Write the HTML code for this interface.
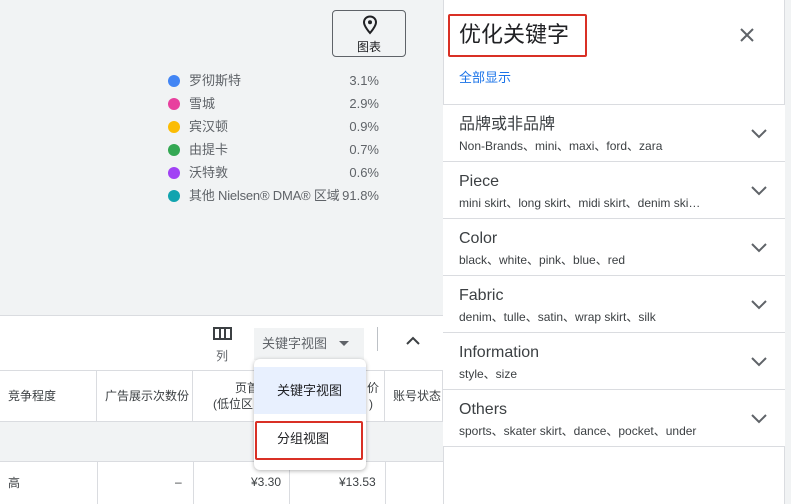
<!DOCTYPE html>
<html><head><meta charset="utf-8"><style>
*{box-sizing:border-box;margin:0;padding:0}
body{width:791px;height:504px;overflow:hidden;position:relative;background:#f1f3f4;font-family:"Liberation Sans","Noto Sans CJK SC",sans-serif;color:#3c4043;line-height:1.15}
.a{position:absolute}
.leg{left:168px;font-size:13px;color:#5f6368;width:215px;height:20px;line-height:16px}
.leg i{position:absolute;left:0;top:2px;width:12px;height:12px;border-radius:50%}
.leg span{position:absolute;left:21px;top:0;white-space:nowrap}
.leg b{position:absolute;right:4px;top:0;font-weight:normal}
.row{position:absolute;left:443px;width:342px;height:57px;border-top:1px solid #dadce0;background:#fff}
.row .t{position:absolute;left:16px;top:10px;font-size:16px;line-height:20px;color:#3c4043}
.row .s{position:absolute;left:16px;top:34px;font-size:12px;line-height:15px;color:#3c4043;white-space:nowrap}
.row svg{position:absolute;right:18px;top:24px}
.th{position:absolute;top:370px;height:52px;border-right:1px solid #dadce0;font-size:12px;color:#3c4043;line-height:15px}
</style></head><body>
<!-- chart button -->
<div class="a" style="left:332px;top:10px;width:74px;height:47px;border:1px solid #5f6368;border-radius:4px;background:#f1f3f4"></div>
<svg class="a" style="left:362px;top:15px" width="16" height="20" viewBox="0 0 16 20"><path d="M8 1.5C4.5 1.5 2 4 2 7.3 2 11.5 8 18 8 18s6-6.5 6-10.7C14 4 11.5 1.5 8 1.5z" fill="none" stroke="#202124" stroke-width="2"/><circle cx="8" cy="7.3" r="2" fill="#202124"/></svg>
<div class="a" style="left:357px;top:40px;font-size:12px;line-height:14px;color:#202124">图表</div>
<div class="a leg" style="top:73px"><i style="background:#4285f4"></i><span>罗彻斯特</span><b>3.1%</b></div>
<div class="a leg" style="top:96px"><i style="background:#e8409e"></i><span>雪城</span><b>2.9%</b></div>
<div class="a leg" style="top:119px"><i style="background:#fbbc04"></i><span>宾汉顿</span><b>0.9%</b></div>
<div class="a leg" style="top:142px"><i style="background:#34a853"></i><span>由提卡</span><b>0.7%</b></div>
<div class="a leg" style="top:165px"><i style="background:#a142f4"></i><span>沃特敦</span><b>0.6%</b></div>
<div class="a leg" style="top:188px"><i style="background:#12a4af"></i><span style="letter-spacing:-0.2px">其他 Nielsen® DMA® 区域</span><b>91.8%</b></div>
<!-- toolbar -->
<div class="a" style="left:0;top:315px;width:443px;height:55px;background:#fff;border-top:1px solid #dadce0"></div>
<svg class="a" style="left:213px;top:327px" width="19" height="13"><rect x="1" y="1" width="17" height="11" fill="none" stroke="#3c4043" stroke-width="2"/><path d="M7 1v11M12 1v11" stroke="#3c4043" stroke-width="2"/></svg>
<div class="a" style="left:216px;top:349px;font-size:12px;line-height:14px;color:#5f6368">列</div>
<div class="a" style="left:254px;top:328px;width:110px;height:32px;background:#f1f3f4"></div>
<div class="a" style="left:262px;top:336px;font-size:13px;line-height:16px;color:#5f6368">关键字视图</div>
<div class="a" style="left:339px;top:341px;border-left:5px solid transparent;border-right:5px solid transparent;border-top:5px solid #5f6368"></div>
<div class="a" style="left:377px;top:327px;width:1px;height:24px;background:#bdc1c6"></div>
<svg class="a" style="left:405px;top:336px" width="16" height="10"><path d="M2 8l6-6 6 6" fill="none" stroke="#3c4043" stroke-width="2"/></svg>
<!-- table -->
<div class="a" style="left:0;top:370px;width:443px;height:134px;background:#fff;border-top:1px solid #dadce0"></div>
<div class="th" style="left:0;width:97px"><span class="a" style="left:8px;top:19px">竞争程度</span></div>
<div class="th" style="left:97px;width:96px;overflow:hidden"><span class="a" style="left:8px;top:19px;white-space:nowrap">广告展示次数份</span></div>
<div class="th" style="left:193px;width:96px"><span class="a" style="left:42px;top:11px">页首</span><span class="a" style="left:20px;top:27px">(低位区</span></div>
<div class="th" style="left:289px;width:96px"><span class="a" style="left:78px;top:11px">价</span><span class="a" style="left:80px;top:27px">)</span></div>
<div class="th" style="left:385px;width:58px;overflow:hidden"><span class="a" style="left:8px;top:19px;white-space:nowrap">账号状态</span></div>
<div class="a" style="left:0;top:421px;width:443px;height:41px;background:#f1f3f4;border-top:1px solid #dadce0;border-bottom:1px solid #dadce0"></div>
<div class="a" style="left:97px;top:462px;width:1px;height:42px;background:#dadce0"></div>
<div class="a" style="left:193px;top:462px;width:1px;height:42px;background:#dadce0"></div>
<div class="a" style="left:289px;top:462px;width:1px;height:42px;background:#dadce0"></div>
<div class="a" style="left:385px;top:462px;width:1px;height:42px;background:#dadce0"></div>
<div class="a" style="left:8px;top:476px;font-size:12px;line-height:15px">高</div>
<div class="a" style="left:175px;top:475px;font-size:12px;line-height:15px">–</div>
<div class="a" style="left:251px;top:475px;font-size:12px;line-height:15px">¥3.30</div>
<div class="a" style="left:339px;top:475px;font-size:12px;line-height:15px">¥13.53</div>
<!-- dropdown menu -->
<div class="a" style="left:254px;top:359px;width:112px;height:111px;background:#fff;border-radius:6px;box-shadow:0 1px 4px rgba(0,0,0,.3)"></div>
<div class="a" style="left:254px;top:367px;width:112px;height:47px;background:#e8f0fe"></div>
<div class="a" style="left:277px;top:383px;font-size:13px;line-height:16px;color:#202124">关键字视图</div>
<div class="a" style="left:255px;top:421px;width:108px;height:39px;border:2px solid #d93025;border-radius:2px"></div>
<div class="a" style="left:277px;top:431px;font-size:13px;line-height:16px;color:#202124">分组视图</div>
<!-- right panel -->
<div class="a" style="left:443px;top:0;width:342px;height:504px;background:#fff;border-left:1px solid #dadce0;border-right:1px solid #dadce0"></div>
<div class="a" style="left:448px;top:14px;width:139px;height:43px;border:2px solid #d93025;border-radius:2px"></div>
<div class="a" style="left:459px;top:21px;font-size:22px;line-height:28px;color:#202124">优化关键字</div>
<svg class="a" style="left:739px;top:27px" width="16" height="16"><path d="M2 2l12 12M14 2L2 14" stroke="#5f6368" stroke-width="2"/></svg>
<div class="a" style="left:459px;top:70px;font-size:13px;line-height:16px;color:#1a73e8">全部显示</div>
<div class="row" style="top:104px"><div class="t">品牌或非品牌</div><div class="s">Non-Brands、mini、maxi、ford、zara</div><svg width="16" height="10"><path d="M1 1l7 7 7-7" fill="none" stroke="#5f6368" stroke-width="2"/></svg></div>
<div class="row" style="top:161px"><div class="t">Piece</div><div class="s">mini skirt、long skirt、midi skirt、denim ski…</div><svg width="16" height="10"><path d="M1 1l7 7 7-7" fill="none" stroke="#5f6368" stroke-width="2"/></svg></div>
<div class="row" style="top:218px"><div class="t">Color</div><div class="s">black、white、pink、blue、red</div><svg width="16" height="10"><path d="M1 1l7 7 7-7" fill="none" stroke="#5f6368" stroke-width="2"/></svg></div>
<div class="row" style="top:275px"><div class="t">Fabric</div><div class="s">denim、tulle、satin、wrap skirt、silk</div><svg width="16" height="10"><path d="M1 1l7 7 7-7" fill="none" stroke="#5f6368" stroke-width="2"/></svg></div>
<div class="row" style="top:332px"><div class="t">Information</div><div class="s">style、size</div><svg width="16" height="10"><path d="M1 1l7 7 7-7" fill="none" stroke="#5f6368" stroke-width="2"/></svg></div>
<div class="row" style="top:389px"><div class="t">Others</div><div class="s">sports、skater skirt、dance、pocket、under</div><svg width="16" height="10"><path d="M1 1l7 7 7-7" fill="none" stroke="#5f6368" stroke-width="2"/></svg></div>
<div class="a" style="left:443px;top:446px;width:342px;height:1px;background:#dadce0"></div>
</body></html>
